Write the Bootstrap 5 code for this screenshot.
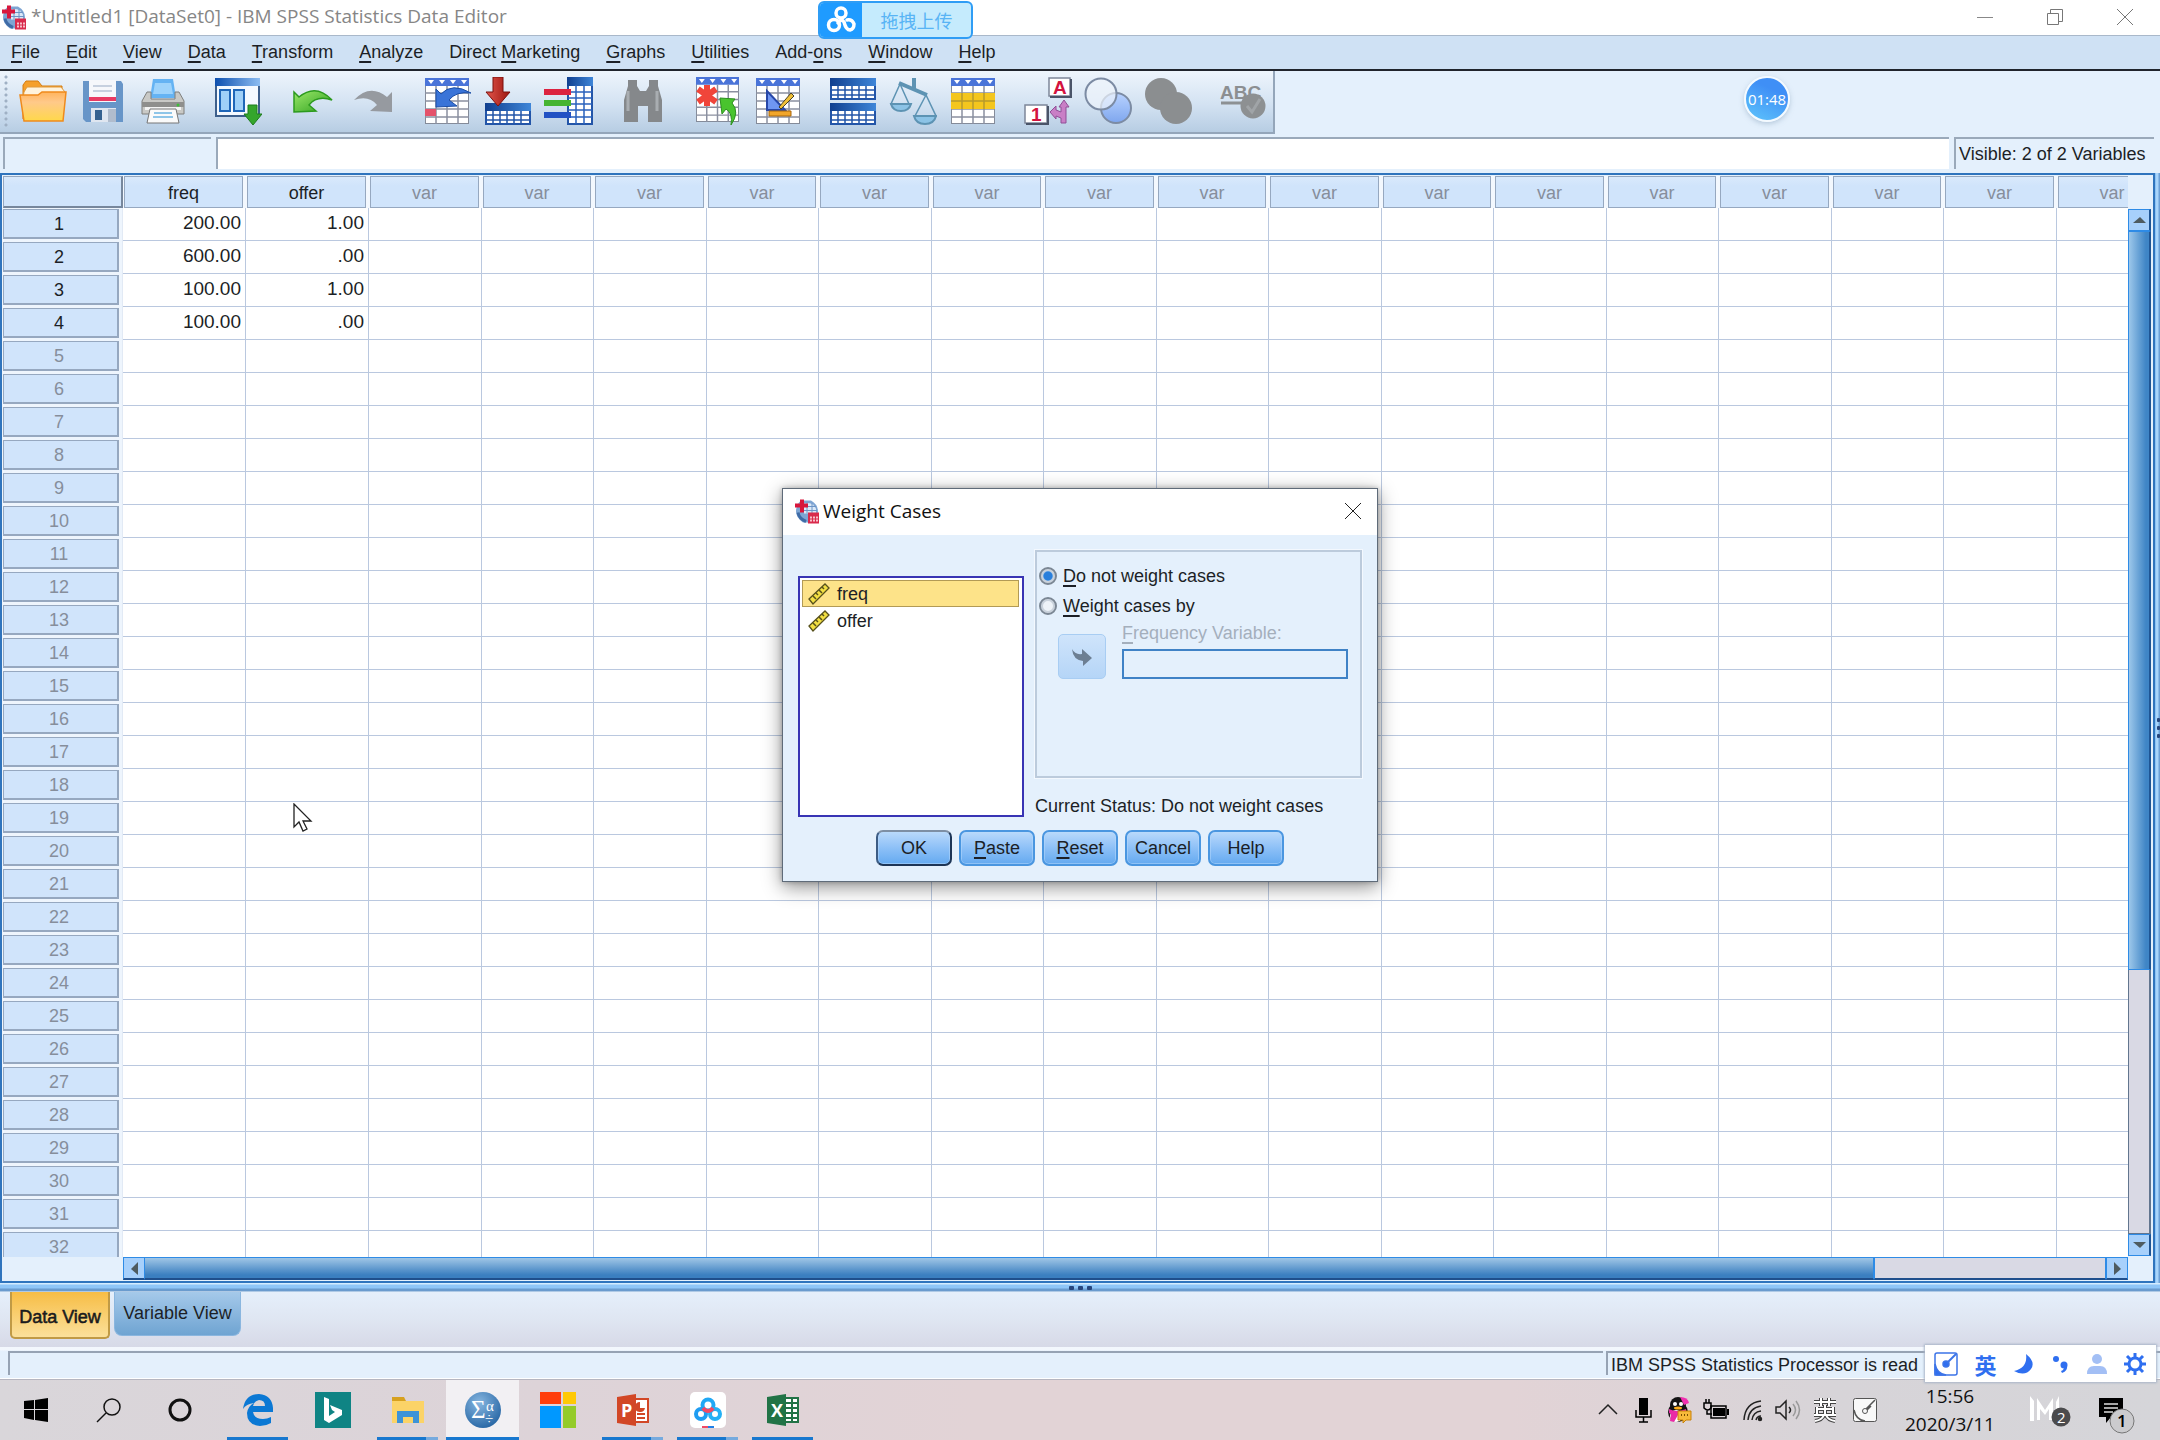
<!DOCTYPE html>
<html lang="en">
<head>
<meta charset="utf-8">
<meta name="viewport" content="width=device-width, initial-scale=1">
<title>*Untitled1 [DataSet0] - IBM SPSS Statistics Data Editor</title>
<link rel="stylesheet" href="https://cdn.jsdelivr.net/npm/bootstrap@5.3.0/dist/css/bootstrap.min.css">
<style>
:root{--pane:#e4f0fc;--head:#d0e4fb;--rule:#bac8df;--edge:#96a8c0;--blue:#3b82c8}
html,body{height:100%}
body{font-family:"Liberation Sans",Arial,sans-serif;font-size:18px;line-height:24px;color:#1c1f26;background:var(--pane);overflow:hidden}
button{font:inherit;color:inherit}
svg{display:block;flex:none}
.sysfont{font-family:"Open Sans","Noto Sans",sans-serif}
.plain{border:0;background:none;padding:0}
.app{height:100vh;min-height:900px}
/* title bar */
.titlebar{height:35px;background:#fff;color:#868686;font-size:19px;padding-left:2px}
.titlebar .caption{padding:0 0 2px 5px}
.winbtn{width:70px;height:33px}
/* menu */
.menubar{height:36px;background:#cfe1f4;border-top:1px solid #a9b8ca;border-bottom:2px solid #20242c}
.menubar a{color:#1c1f26;padding:4px 13px;text-decoration:none}
.menubar a:first-child{padding-left:11px}
.menubar u,.dlg u{text-underline-offset:3px;text-decoration-thickness:2px}
/* toolbar */
.toolrow{height:66px;background:var(--pane)}
.tools{height:63px;padding-left:13px;gap:15px;background:linear-gradient(#eef5fc,#d3e2f2 55%,#b7cde3);border-right:2px solid #94a6ba;border-bottom:2px solid #94a6ba;position:relative}
.grip{position:absolute;left:4px;top:4px;bottom:4px;width:4px;background:radial-gradient(circle at 2px 2px,#9fb0c4 1px,#f4f9ff00 2px);background-size:4px 6px}
.tools button{width:60px;height:60px}
.timer{position:absolute;top:76px;right:370px;width:46px;height:46px;border-radius:50%;border:2px solid #f4faff;background:linear-gradient(25deg,#5ec4fb,#3f8ff6 70%);color:#fff;font-size:15px;box-shadow:0 2px 5px #8aa3bd80}
.upload{position:absolute;top:1px;left:818px;width:155px;height:38px;border:2px solid #2f9df5;border-radius:6px;background:#c5ebfd;color:#58b4f5;font-family:"Noto Sans CJK SC",sans-serif;overflow:hidden}
.upload .mark-box{width:42px;background:#1f9bff;align-self:stretch}
/* cell editor */
.editrow{height:36px;padding:0 6px 4px 3px;gap:5px}
.editrow>*{height:32px;border:0;border-top:2px solid #9aa9ba;border-left:2px solid #9aa9ba;border-radius:0}
.cellname{width:208px;background:var(--pane)}
.cellval{background:#fff}
.visible-vars{padding:3px;white-space:nowrap;width:200px}
/* data grid */
.frame-area{padding-right:5px;background:linear-gradient(90deg,#6fb0ee calc(100% - 5px),#a9d5fb calc(100% - 4px),#a9d5fb calc(100% - 2px),#6b9fd6 calc(100% - 1px));min-height:0}
.frame-box{border:2px solid #2f74bd;background:var(--pane);padding:1px 2px 0 0;min-height:0;min-width:0}
.gridwrap{overflow:hidden;min-height:0;background:#fff}
.gridpane{padding-bottom:1px}
.dgrid{table-layout:fixed;border-collapse:separate;border-spacing:0;width:2167px;font-size:19px}
.dgrid td,.dgrid th{padding:0;font-weight:400;white-space:nowrap}
.dgrid td{height:33px;border-right:1px solid var(--rule);border-bottom:1px solid var(--rule);text-align:right;padding:0 4px 1px 0;line-height:24px}
.dgrid thead th{height:32px;background:#f3f8fe}
.dgrid thead span{display:block;height:32px;margin:0 3px 0 1px;border:1px solid var(--edge);background:linear-gradient(#d9e9fc,var(--head) 30%);text-align:center;line-height:32px;font-size:18px}
.dgrid thead th:first-child span{margin:0 0 0 1px;border-right:2px solid #77879c;border-bottom:2px solid #77879c}
.dgrid tbody th{height:33px;background:#eef5fd;border-right:1px solid #e2eaf5}
.dgrid tbody th span{display:block;height:30px;margin:1px 3px 2px 1px;border:1px solid var(--edge);border-right-width:2px;border-bottom-width:2px;background:var(--head);text-align:center;line-height:28px;font-size:18px;padding-right:3px}
.off{color:#868e9b}
.faded{color:#a4afbc}
.c0{width:121px}.c1{width:123px}.c2{width:113px}.c3{width:112px}
.vbar{width:23px;padding-top:33px}
.vbar>*{border:1px solid #2e8be6;border-right:2px solid #1f5594}
.vbar button{height:22px;background:#a7d0fb}
.vbar button svg,.hbar button svg{margin:auto}
.vthumb{flex:741;background:linear-gradient(90deg,#9cc7ea,#3f85c6 85%)}
.vtrack{flex:264;background:#d9d9e4;border-color:#62758e!important;border-top:0!important}
.hbar{height:23px;margin-left:121px}
.hbar>*{border:1px solid #2e8be6;border-bottom:2px solid #1f4f8c}
.hbar button{width:22px;background:#a7d0fb}
.hthumb{flex:1732;background:linear-gradient(#a0c6e6,#3b7fc0 85%);border-left:0!important}
.htrack{flex:230;background:#d9d9e4}
.corner{height:25px}
.splitter{height:9px;background:linear-gradient(#d4ecff 1px,#8fc6f8 2px,#8fc6f8 5px,#6a9bce 6px,#6a9bce 8px,#f4f8fd 9px)}
.knob{width:5px;height:4px;background:#27467c;border-radius:1px}
.side-knob{position:absolute;right:0;top:718px}
.side-knob .knob{width:3px}
.viewtabs{height:55px;padding-left:10px;gap:4px;background:linear-gradient(#e5effb,#dfe6f2 50%,#d7d9e7);align-items:flex-start}
.tab-on{width:100px;height:47px;border:2px solid #c09a45;border-top:0;border-radius:0 0 5px 5px;background:linear-gradient(#f7bd45,#fbe09a);-webkit-text-stroke:.5px #111;white-space:nowrap;padding:4px 0 0}
.tab-off{width:127px;height:44px;border:1px solid #8ab6df;border-top:0;border-radius:0 0 8px 8px;background:linear-gradient(#a5c9ea,#6fa4d2);padding-bottom:3px}
.statusbar{height:32px;padding:4px 0 3px 8px;gap:3px;border-bottom:1px solid #fff;background:linear-gradient(#f3f7fd 3px,var(--pane) 4px)}
.statusbar>*{border-top:2px solid #96a3b4;border-left:2px solid #96a3b4}
.ready{width:554px;padding-left:3px;white-space:nowrap}
.ime{position:absolute;top:-35px;right:4px;width:231px;height:37px;background:#fff;box-shadow:0 0 2px 1px #a9b5c8;padding:0 10px 0 9px;color:#2f6ff0;font-family:"Noto Sans CJK SC",sans-serif;font-weight:700;font-size:22px}
/* dialog */
.dlg{top:488px;width:596px;background:var(--pane);border:1px solid #5f6b79;box-shadow:0 5px 18px #00000070,0 0 5px #00000040}
.dlg-head{height:46px;background:#fff;padding:0 16px 2px 12px;color:#111;font-size:19px}
.dlg-body{padding:15px}
.varlist{width:226px;height:241px;border:2px solid #3834b4;background:#fff;padding:2px 3px 2px 2px;margin-top:26px;margin-right:11px}
.varlist button{height:27px;width:100%;padding:0 4px;gap:6px;border:1px solid transparent;background:none;text-align:left}
.varlist button[aria-selected=true]{background:#fde389;border-color:#b29a55}
.groupbox{width:327px;height:228px;border:2px solid #bccbdc;outline:1px solid #f3f8fe;padding:9px 2px}
.groupbox .form-check{min-height:30px;padding:0;margin:0;gap:6px;display:flex;align-items:center}
.groupbox .form-check-input{float:none;margin:0;width:18px;height:18px;border:2px solid #7b8794;background:#eef3f8;box-shadow:inset 0 0 0 2px #c9d2dc}
.groupbox .form-check-input:checked{background:radial-gradient(circle,#2a7fdb 4px,#7fb4e8 5px,#dce6f0 6px)}
.mover{width:48px;height:45px;margin-left:19px;border:1px solid #a8cdf3;border-radius:5px;background:linear-gradient(#cfe4fb,#b5d5f7)}
.freqin{width:226px;height:30px;border:2px solid #3f82c6;border-radius:0;background:var(--pane);padding:0 4px}
.dlgbtn{width:76px;height:36px;padding:0;border:2px solid #4a96e0;border-radius:7px;background:linear-gradient(#b9d9fb,#8dc0f7 50%,#65aaf0);box-shadow:inset 0 0 0 1px #b7dafb80}
.dlgbtn.first{border-color:#7e8fa4 #1d3556 #1d3556 #3c5c84}
.dlgbtns{gap:7px}
/* taskbar */
.taskbar{height:61px;border-top:1px solid #b6b6c0;background:linear-gradient(90deg,#d9d6da,#ddd3d8 25%,#e2d3d6 45%,#e2d3d6 70%,#d7d4d8 85%,#d5d5d9);position:relative}
.taskbar .sys{width:72px}
.taskbar .prog{width:75px;position:relative}
.prog.run::after{content:"";position:absolute;left:7px;right:7px;bottom:0;height:3px;background:#1878cf}
.prog.multi::after{background:linear-gradient(90deg,#1878cf 80%,#76aade 80%)}
.taskbar .prog.cur{background:#f2f0f3;width:73px;margin:0 1px}
.prog.cur::after{left:0;right:0}
.tray{gap:11px}
.clock{font-size:19px;line-height:28px;text-align:center;color:#111;width:116px}
.pointer{position:absolute;left:293px;top:803px}
</style>
<script src="https://cdn.jsdelivr.net/npm/bootstrap@5.3.0/dist/js/bootstrap.bundle.min.js"></script>
</head>
<body>
<!-- shared symbols -->
<svg width="0" height="0" class="position-absolute" aria-hidden="true">
<defs>
<linearGradient id="gb" x1="0" x2="1"><stop offset="0" stop-color="#0d4fae"/><stop offset="1" stop-color="#8dbdf2"/></linearGradient>
<linearGradient id="gn" x1="0" x2="1"><stop offset="0" stop-color="#103f8f"/><stop offset="1" stop-color="#3f86d8"/></linearGradient>
<linearGradient id="go" x1="0" y1="0" x2="0" y2="1"><stop offset="0" stop-color="#ffb45e"/><stop offset=".35" stop-color="#ffc98a"/><stop offset="1" stop-color="#ffd84a"/></linearGradient>
<linearGradient id="gg" x1="0" y1="0" x2="1" y2="1"><stop offset="0" stop-color="#9be86a"/><stop offset="1" stop-color="#2ea01e"/></linearGradient>
<linearGradient id="gr" x1="0" x2="1"><stop offset="0" stop-color="#e2564c"/><stop offset="1" stop-color="#9c150f"/></linearGradient>
<linearGradient id="gl" x1="0" y1="0" x2="0" y2="1"><stop offset="0" stop-color="#b8d2ff"/><stop offset="1" stop-color="#7ea6ee"/></linearGradient>
<radialGradient id="gs" cx=".4" cy=".3" r=".8"><stop offset="0" stop-color="#86b6e0"/><stop offset="1" stop-color="#1f5f9f"/></radialGradient>
<symbol id="spss" viewBox="0 0 24 24"><path d="M6 1h10q7 4 7 11t-7 11H8q-7-5-7-11Q1 5 6 1z" fill="#7ea5d3"/><path d="M9 4q8-2 12 5v5H9z" fill="#dbe9f8"/><path d="M9 7h12M9 11h13M12 3v11M17 4v10" stroke="#6d94c6"/><path d="M3 13q1 6 8 9" stroke="#3f6ba6" stroke-width="3" fill="none"/><path d="M5 0h4v4h4v4H9v5H5V8H0V4h5z" fill="#d8163c"/><path d="M13 13h11v11H13z" fill="#d92a4c"/><path d="M15 17h2v2h-2zM18 17h2v2h-2zM21 17h2v2h-2zM15 20h2v2h-2zM18 20h2v2h-2zM21 20h2v2h-2z" fill="#f8c2cc"/></symbol>
<symbol id="ruler" viewBox="0 0 24 22"><path d="M2 16 18 1l4 4L6 21z" fill="#f2df42" stroke="#57511c" stroke-width="1.3"/><path d="m6 13 3 3m0-6 2 2m1-5 3 3m0-6 2 2" stroke="#57511c" stroke-width="1.5"/></symbol>
<symbol id="sheet" viewBox="0 0 44 46"><path d="M0 0h44v46H0z" fill="#fff" stroke="#848b99" stroke-width="2"/><path d="M0 0h44v8H0z" fill="#4a74d8"/><path d="M3 2h6l-3 4zM14 2h6l-3 4zM25 2h6l-3 4zM36 2h6l-3 4z" fill="#fff"/><path d="M0 15h44M0 23h44M0 31h44M0 39h44M11 8v38M22 8v38M33 8v38" stroke="#8b90a0" stroke-width="1.5"/></symbol>
<symbol id="minitab" viewBox="0 0 46 22"><path d="M1 1h44v20H1z" fill="#fff" stroke="#2355a8" stroke-width="2"/><path d="M0 0h46v8H0z" fill="url(#gn)"/><path d="M1 12h44M1 17h44M8 8v13M15 8v13M22 8v13M29 8v13M36 8v13" stroke="#2355a8" stroke-width="1.5"/></symbol>
<symbol id="cloud3" viewBox="0 0 30 28"><g fill="none" stroke-width="3.5" stroke-linecap="round"><circle cx="15" cy="7" r="5"/><circle cx="8" cy="19" r="5.500"/><path d="M12 17q3-5 6-1 2 8 6 8 4-1 4-6-2-5-7-4"/></g></symbol>
</defs></svg>

<div class="app d-flex flex-column position-relative">
  <header class="titlebar sysfont d-flex align-items-center">
    <svg width="24" height="25"><use href="#spss"/></svg>
    <span class="caption flex-grow-1">*Untitled1 [DataSet0] - IBM SPSS Statistics Data Editor</span>
    <button class="winbtn plain d-flex align-items-center justify-content-center" aria-label="Minimize"><svg width="16" height="16"><path d="M0 8.500h16" stroke="#888"/></svg></button>
    <button class="winbtn plain d-flex align-items-center justify-content-center" aria-label="Restore"><svg width="16" height="16" fill="none" stroke="#777"><path d="M.5 4.500h11v11H.5zM3.500 4V.5h12v12H12"/></svg></button>
    <button class="winbtn plain d-flex align-items-center justify-content-center" aria-label="Close"><svg width="16" height="16" stroke="#777"><path d="m0 0 16 16M16 0 0 16"/></svg></button>
  </header>

  <nav class="menubar d-flex align-items-center flex-shrink-0" aria-label="Main menu">
    <a href="#"><u>F</u>ile</a><a href="#"><u>E</u>dit</a><a href="#"><u>V</u>iew</a><a href="#"><u>D</u>ata</a><a href="#"><u>T</u>ransform</a><a href="#"><u>A</u>nalyze</a><a href="#">Direct <u>M</u>arketing</a><a href="#"><u>G</u>raphs</a><a href="#"><u>U</u>tilities</a><a href="#">Add-<u>o</u>ns</a><a href="#"><u>W</u>indow</a><a href="#"><u>H</u>elp</a>
  </nav>

  <div class="toolrow d-flex align-items-start flex-shrink-0">
    <div class="tools d-flex align-items-center" role="toolbar" aria-label="Data editor tools">
      <span class="grip"></span>
      <div class="d-flex">
        <button class="plain" aria-label="Open"><svg class="m-auto" width="48" height="48" viewBox="0 0 48 48"><path d="M4 42V8l3-4h12l4 5h20v33z" fill="#f5a02c" stroke="#d57c10"/><path d="M5 15 8 10h34l4 5v6H4z" fill="#fff3dc" stroke="#e09a3a"/><path d="M1 18h18l4-3h24l-3 29H5z" fill="url(#go)" stroke="#ef8a1c" stroke-width="1.500"/></svg></button>
        <button class="plain" aria-label="Save"><svg class="m-auto" width="44" height="44" viewBox="0 0 44 44"><path d="M2 2h38l2 3v38H5l-3-3z" fill="#6795c8"/><path d="M8 1h27v22H8z" fill="#f5f7fb"/><path d="M12 7h19M12 12h19" stroke="#b7c3d6" stroke-width="1.500"/><path d="M8 18h27v4H8z" fill="#e83a63"/><path d="M10 29h25v14H10z" fill="#dfe6f0"/><path d="M14 31h7v10h-7z" fill="#35618f"/><path d="M27 30h8v13h-8z" fill="#b0bccd"/></svg></button>
        <button class="plain" aria-label="Print"><svg class="m-auto" width="44" height="46" viewBox="0 0 44 46"><path d="M12 1h20l3 19H9z" fill="#65b3f3"/><path d="M14 5h16l2 11H12z" fill="#9ed3fb"/><path d="M6 14h4v7h24v-7h4l5 9v13H1V23z" fill="#c9c9c6" stroke="#7f7f7d"/><path d="M1 24h42v5H1z" fill="#8f8f8d"/><path d="M4 29h36v3H4z" fill="#f4f4f4"/><path d="M9 31h26l3 14H6z" fill="#fafafa" stroke="#777"/><path d="M13 35h18M12 39h20" stroke="#8ec5e8" stroke-width="2"/><circle cx="37" cy="27" r="1.500" fill="#3fbd3a"/></svg></button>
      </div>
      <div class="d-flex">
        <button class="plain" aria-label="Recall dialogs"><svg class="m-auto" width="48" height="48" viewBox="0 0 48 48"><path d="M2 2h43v37H2z" fill="#f4f9ff" stroke="#3d5f8c" stroke-width="2"/><path d="M1 1h45v8H1z" fill="url(#gb)"/><path d="M6 13h10v21H6zM20 13h10v21H20z" fill="#9fd0f8" stroke="#1f66b8" stroke-width="2"/><path d="M34 28h9v9h5l-9 11-9-11h4z" fill="#35a62c" stroke="#1d7c1c"/></svg></button>
      </div>
      <div class="d-flex">
        <button class="plain" aria-label="Undo"><svg class="m-auto" width="42" height="26" viewBox="0 0 42 26"><path d="m2 4 5 5Q24-5 40 12 25 7 17 17l7 6-22 1z" fill="url(#gg)" stroke="#2c9a1e" stroke-width="1.500"/></svg></button>
        <button class="plain" aria-label="Redo"><svg class="m-auto" width="42" height="26" viewBox="0 0 42 26"><path d="m40 4-5 5Q18-5 2 12q15-5 23 5l-7 6 22 1z" fill="#969aa0"/></svg></button>
      </div>
      <div class="d-flex">
        <button class="plain" aria-label="Go to case"><svg class="m-auto" width="48" height="48" viewBox="0 0 48 48"><use href="#sheet" x="1" y="1" width="44" height="46"/><path d="M1 32h11v7H1z" fill="#e4526a"/><path d="m12 12 5 5Q28 5 47 16 32 14 25 23l8 6-21 1z" fill="#3a74d8" stroke="#1c4ea6"/></svg></button>
        <button class="plain" aria-label="Go to variable"><svg class="m-auto" width="48" height="48" viewBox="0 0 48 48"><use href="#minitab" x="1" y="26" width="46" height="22"/><path d="M9 0h10v15h7L14 29 2 15h7z" fill="url(#gr)" stroke="#7d100c"/></svg></button>
        <button class="plain" aria-label="Variables"><svg class="m-auto" width="50" height="48" viewBox="0 0 50 48"><path d="M25 1h24v46H25z" fill="#fff" stroke="#2355a8" stroke-width="2"/><path d="M24 0h26v9H24z" fill="url(#gn)"/><path d="M25 15h24M25 21h24M25 27h24M25 33h24M25 40h24M33 8v39M41 8v39" stroke="#2a62bd" stroke-width="1.500"/><path d="M1 12h27v6H1z" fill="#dc2340"/><path d="M1 23h27v6H1z" fill="#46b432"/><path d="M1 35h27v6H1z" fill="#2352c4"/></svg></button>
      </div>
      <div class="d-flex">
        <button class="plain" aria-label="Find"><svg class="m-auto" width="40" height="44" viewBox="0 0 40 44" fill="#85888b"><path d="M5 1h9v6l3 5h6l3-5V1h9v6l4 14v22H25V27H15v16H1V21L5 7z"/><path d="M5 12v20M34 12v20" stroke="#a9adb1" stroke-width="3"/></svg></button>
      </div>
      <div class="d-flex">
        <button class="plain" aria-label="Insert cases"><svg class="m-auto" width="46" height="50" viewBox="0 0 46 50"><use href="#sheet" x="1" y="1" width="43" height="45"/><g stroke="#f0453a" stroke-width="6"><path d="M12 9v21M3 13l18 13M21 13 3 26"/></g><path d="m25 22 15 1-3 4q8 9-1 22 2-12-5-16l-4 5z" fill="#49c42e" stroke="#2c8f1e"/></svg></button>
        <button class="plain" aria-label="Insert variable"><svg class="m-auto" width="46" height="48" viewBox="0 0 46 48"><use href="#sheet" x="1" y="1" width="44" height="46"/><path d="M12 14v19h18z" fill="#6f96f2" stroke="#2747a8" stroke-width="2"/><path d="m24 30 12-14 3 3-13 13z" fill="#f0c038" stroke="#4b4326"/><path d="M14 34h22v5H14z" fill="#f1a62b" stroke="#a8660d"/></svg></button>
      </div>
      <div class="d-flex">
        <button class="plain" aria-label="Split file"><svg class="m-auto" width="46" height="48" viewBox="0 0 46 48"><use href="#minitab" y="1" width="46" height="22"/><use href="#minitab" y="26" width="46" height="22"/></svg></button>
        <button class="plain" aria-label="Weight cases"><svg class="m-auto" width="48" height="48" viewBox="0 0 48 48" fill="none" stroke="#5d93b3" stroke-width="2"><path d="M25 1v12M10 6l28 12" stroke-width="4"/><path d="M11 7 2 27h18zM37 18l-11 21h21z" stroke-width="1.500"/><path d="M2 27h20q-2 7-10 7T2 27zM25 39h22q-2 8-11 8t-11-8z" fill="#8cc3e6"/></svg></button>
        <button class="plain" aria-label="Select cases"><svg class="m-auto" width="46" height="48" viewBox="0 0 46 48"><use href="#sheet" x="1" y="1" width="44" height="46"/><path d="M1 16h44v16H1z" fill="#f4c61e"/><path d="M1 24h44M12 16v16M23 16v16M34 16v16" stroke="#b79a2c" stroke-width="1.500"/></svg></button>
      </div>
      <div class="d-flex">
        <button class="plain" aria-label="Value labels"><svg class="m-auto" width="48" height="50" viewBox="0 0 48 50" font-family="Liberation Sans,sans-serif" font-weight="700" font-size="19" fill="#d3133f"><path d="M25 2h21v18H25zM1 29h22v18H1z" fill="#fff" stroke="#7e8799" stroke-width="1.500"/><path d="M47 3v18H26M24 30v18H2" stroke="#4a5468" stroke-width="2" fill="none"/><text x="29" y="18">A</text><text x="7" y="45">1</text><path d="m40 24 5 7h-3v16h-5v-5l-5-2v3l-6-7 6-6v4l5 2v-5h-2z" fill="#c97fc6" stroke="#8f4f96"/></svg></button>
        <button class="plain" aria-label="Use variable sets"><svg class="m-auto" width="48" height="48" viewBox="0 0 48 48" stroke="#7c8ba3" stroke-width="2"><circle cx="32" cy="31" r="15" fill="url(#gl)"/><circle cx="17" cy="17" r="15.500" fill="#eef3fb" fill-opacity=".7"/></svg></button>
        <button class="plain" aria-label="Show all variables"><svg class="m-auto" width="48" height="48" viewBox="0 0 48 48" fill="#8b8e90"><circle cx="17" cy="17" r="16"/><circle cx="32" cy="31" r="16"/></svg></button>
      </div>
      <div class="d-flex">
        <button class="plain" aria-label="Spell check"><svg class="m-auto" width="48" height="38" viewBox="0 0 48 38"><text x="1" y="17" font-family="Liberation Sans,sans-serif" font-weight="700" font-size="19" fill="#8c8f91">ABC</text><path d="M2 21h22" stroke="#8c9093" stroke-width="3"/><circle cx="34" cy="24" r="12.500" fill="#8d9092"/><path d="m28 24 5 6 8-13" fill="none" stroke="#a0a4a7" stroke-width="3"/></svg></button>
      </div>
    </div>
  </div>

  <div class="editrow d-flex flex-shrink-0">
    <div class="cellname"></div>
    <input class="cellval flex-grow-1" aria-label="Cell value">
    <div class="visible-vars">Visible: 2 of 2 Variables</div>
  </div>

  <main class="frame-area d-flex flex-grow-1">
    <div class="frame-box d-flex flex-grow-1">
      <div class="gridpane d-flex flex-column flex-grow-1 overflow-hidden">
        <div class="gridwrap flex-grow-1">
          <table class="dgrid" id="grid"><colgroup></colgroup><thead><tr></tr></thead><tbody></tbody></table>
        </div>
        <div class="hbar d-flex flex-shrink-0">
          <button class="plain d-flex" aria-label="Scroll left"><svg width="9" height="13"><path d="M8 0v13L1 7z" fill="#4e5b60"/></svg></button>
          <div class="hthumb"></div><div class="htrack"></div>
          <button class="plain d-flex" aria-label="Scroll right"><svg width="9" height="13"><path d="M1 0v13l7-6z" fill="#4e5b60"/></svg></button>
        </div>
      </div>
      <div class="vbar d-flex flex-column flex-shrink-0">
        <button class="plain d-flex" aria-label="Scroll up"><svg width="13" height="8"><path d="M0 7h13L7 1z" fill="#4e5b60"/></svg></button>
        <div class="vthumb"></div><div class="vtrack"></div>
        <button class="plain d-flex" aria-label="Scroll down"><svg width="13" height="8"><path d="M0 1h13L7 7z" fill="#4e5b60"/></svg></button>
        <div class="corner border-0"></div>
      </div>
    </div>
  </main>

  <div class="splitter d-flex justify-content-center align-items-center gap-1 flex-shrink-0"><i class="knob"></i><i class="knob"></i><i class="knob"></i></div>

  <div class="viewtabs d-flex flex-shrink-0" role="tablist">
    <button class="tab-on" role="tab" aria-selected="true">Data View</button>
    <button class="tab-off px-0" role="tab" aria-selected="false">Variable View</button>
  </div>

  <div class="statusbar d-flex flex-shrink-0">
    <div class="flex-grow-1"></div>
    <div class="ready">IBM SPSS Statistics Processor is read</div>
  </div>

  <footer class="taskbar d-flex align-items-stretch flex-shrink-0">
    <button class="plain sys" aria-label="Start"><svg class="m-auto" width="24" height="24"><path d="m0 3 10-1v9H0zM11 2l13-2v11H11zM0 12h10v10L0 20zM11 12h13v12l-13-2z"/></svg></button>
    <button class="plain sys" aria-label="Search"><svg class="m-auto" width="25" height="25" fill="none" stroke="#111" stroke-width="1.500"><circle cx="16" cy="9" r="8"/><path d="M10 15 1 24"/></svg></button>
    <button class="plain sys me-1" aria-label="Cortana"><svg class="m-auto" width="24" height="24" fill="none" stroke="#111" stroke-width="3"><circle cx="12" cy="12" r="10"/></svg></button>
    <button class="plain prog run" aria-label="Edge"><svg class="m-auto" width="30" height="32" viewBox="0 0 30 32"><path d="M0 15Q2 0 16 0q13 1 14 14v4H10q1 7 10 7 4 0 8-2v6q-5 3-11 3Q4 31 4 19q1-7 7-10-8 1-11 6zm10-3h12q0-6-6-6-5 1-6 6z" fill="#0b78d4"/></svg></button>
    <button class="plain prog" aria-label="Bing"><svg class="m-auto" width="36" height="36"><path d="M0 0h36v36H0z" fill="#0f8484"/><path d="m9 5 5 2v17l6-4-3-2-2-5 12 5v5l-13 8-5-3z" fill="#fff"/></svg></button>
    <button class="plain prog run multi" aria-label="File Explorer"><svg class="m-auto" width="32" height="28"><path d="M0 1h12l2 4H0z" fill="#d7a11f"/><path d="M0 5h32v22H0z" fill="#fbd367"/><path d="M5 15h22v12h-6v-6H11v6H5z" fill="#3d93d8"/></svg></button>
    <button class="plain prog run cur" aria-label="SPSS Statistics"><svg class="m-auto" width="36" height="36" font-family="Liberation Serif,serif" fill="#fff"><circle cx="18" cy="18" r="18" fill="url(#gs)"/><text x="6" y="26" font-size="25">Σ</text><text x="21" y="19" font-size="15">α</text><text x="20" y="32" font-size="15">÷</text></svg></button>
    <button class="plain prog" aria-label="Microsoft"><svg class="m-auto" width="36" height="36"><path d="M0 0h21v12H0z" fill="#ff3d0a"/><path d="M23 0h13v12H23z" fill="#ffc905"/><path d="M0 14h21v22H0z" fill="#0098ff"/><path d="M23 14h13v22H23z" fill="#94cb2a"/></svg></button>
    <button class="plain prog run multi" aria-label="PowerPoint"><svg class="m-auto" width="32" height="32"><path d="M18 5h13v23H18z" fill="#fff" stroke="#d24726" stroke-width="2"/><path d="M20 20h8M20 24h8" stroke="#d24726" stroke-width="2"/><path d="M23 8a5 5 0 1 0 5 6h-5z" fill="#d24726"/><path d="M0 3 19 0v32L0 29z" fill="#d24726"/><text x="4" y="23" font-family="Open Sans,sans-serif" font-weight="700" font-size="18" fill="#fff">P</text></svg></button>
    <button class="plain prog run multi" aria-label="Baidu Netdisk"><svg class="m-auto" width="36" height="36"><rect width="36" height="36" rx="5" fill="#fff"/><g fill="none" stroke-width="4"><circle cx="18" cy="13" r="5.500" stroke="#20a8f5"/><circle cx="11" cy="22" r="5" stroke="#1f9df2"/><circle cx="25" cy="22" r="5" stroke="#24b0f5"/><path d="M13 16q5 6 10 0" stroke="#f04a66"/></g><path d="M12 35h6" stroke="#f04a66" stroke-width="2"/><path d="M18 35h6" stroke="#1f7fe8" stroke-width="2"/></svg></button>
    <button class="plain prog run" aria-label="Excel"><svg class="m-auto" width="32" height="32"><path d="M18 4h13v24H18z" fill="#fff" stroke="#217346" stroke-width="2"/><path d="M18 9h13M18 14h13M18 19h13M18 24h13M25 4v24" stroke="#217346" stroke-width="2"/><path d="M0 3 19 0v32L0 29z" fill="#217346"/><text x="4" y="23" font-family="Open Sans,sans-serif" font-weight="700" font-size="18" fill="#fff">X</text></svg></button>

    <div class="tray d-flex align-items-center ms-auto">
      <svg width="24" height="24" fill="none" stroke="#222" stroke-width="1.500"><path d="m3 16 9-9 9 9"/></svg>
      <svg width="24" height="26"><path d="M8 1h9v17H8z"/><path d="M5 13v7h15v-7M12.500 20v5M8 25h9" fill="none" stroke="#000" stroke-width="1.500"/></svg>
      <svg width="26" height="26"><ellipse cx="12" cy="15" rx="10" ry="10" fill="#141414"/><ellipse cx="12" cy="8" rx="8" ry="8" fill="#141414"/><path d="M14 0q8 0 9 6l-5 2z" fill="#f12fb0"/><ellipse cx="10" cy="19" rx="6" ry="6" fill="#fff"/><path d="M3 12q8 4 17 0v4q-4 2-8 2l-4 7-4-1 1-7-2-1z" fill="#ea2aa6"/><circle cx="9" cy="7" r="2" fill="#fff"/><circle cx="15" cy="7" r="2" fill="#fff"/><ellipse cx="12" cy="11" rx="4" ry="1.500" fill="#ffae1a"/><path d="M12 14h13v9h-5l-3 3v-3h-5z" fill="#f7b93a" stroke="#c98108"/><path d="M15 18h1M18 18h1M21 18h1" stroke="#7a4e00" stroke-width="2"/></svg>
      <svg width="26" height="24"><path d="M8 8h15v12H8z" stroke="#000" fill="none" stroke-width="1.500"/><path d="M10 10h12v8H10zM24 11h2v6h-2z"/><path d="M1 5h7v5q-3 4-7 0zM3 1v4M6 1v4M4 12v4h5" fill="none" stroke="#000" stroke-width="1.500"/></svg>
      <svg width="24" height="24" fill="none" stroke="#222" stroke-width="1.500"><path d="M4 22Q5 5 21 3M8 22Q9 10 21 8M12 22q1-8 9-9M16 22q1-4 5-4"/><circle cx="20" cy="21" r="1.500" fill="#222"/></svg>
      <svg width="26" height="24" fill="none" stroke="#222" stroke-width="1.500"><path d="M1 9h4l6-6v18l-6-6H1zM14 9q3 3 0 6"/><path d="M18 6q5 6 0 12M21 3q7 9 0 18" stroke="#999"/></svg>
      <svg width="26" height="26" fill="none" stroke="#444" stroke-width="4"><path d="M2 5h22M9 1v8M17 1v8M5 12h16M5 10v8M21 10v8M13 8v10M2 18h22M12 18q-2 5-9 6M14 18q2 5 9 6"/><path d="M2 5h22M9 1v8M17 1v8M5 12h16M5 10v8M21 10v8M13 8v10M2 18h22M12 18q-2 5-9 6M14 18q2 5 9 6" stroke="#fff" stroke-width="2"/></svg>
      <svg class="ms-1" width="24" height="24" fill="#f8f8f8" stroke="#555"><rect x=".5" y=".5" width="23" height="23" rx="2"/><path d="M1 12q2 10 11 11M13 11l9-9M11 15l7-7" fill="none" stroke-width="1.500"/><circle cx="12" cy="13" r="2.500"/></svg>
      <div class="clock sysfont ms-1">15:56<br>2020/3/11</div>
      <svg class="ms-2" width="44" height="34"><path d="M3 3v25h4V8zM10 5l8 12 8-12v22h-4V16l-4 6-5-6v11h-3zM29 9v12h3V3z" fill="#fff"/><circle cx="34" cy="24" r="9.500" fill="#4b4b4d"/><text x="30" y="30" font-family="Open Sans,sans-serif" font-size="15" fill="#fff">2</text></svg>
      <svg class="ms-3 me-4" width="38" height="50" viewBox="0 -12 38 50"><path d="M1 1h24v19H13l-5 6v-6H1z"/><path d="M6 7h14M6 11h14M6 15h9" stroke="#ddd" stroke-width="1.500"/><circle cx="24" cy="24" r="12" fill="#cbcbce" stroke="#777"/><text x="19" y="30" font-family="Open Sans,sans-serif" font-size="17" font-weight="600">1</text></svg>
    </div>

    <div class="ime d-flex align-items-center justify-content-between">
      <svg width="24" height="24" fill="none" stroke="#3c74e8" stroke-width="1.500"><rect x="1" y="1" width="22" height="22" rx="2"/><path d="M1 12q2 10 11 11H1z" fill="#2f6ff0"/><circle cx="12" cy="12" r="3" fill="#2f6ff0"/><path d="m13 11 9-9" stroke-width="2"/></svg>
      <span>英</span>
      <svg width="22" height="22"><path d="M13 1q10 8 5 15-6 8-17 2 14-3 12-17z" fill="#2f6ff0"/></svg>
      <svg width="18" height="20" fill="#2f6ff0"><circle cx="5" cy="5" r="3"/><circle cx="13" cy="11" r="3.500"/><path d="M16 11q1 6-5 8l-1-2q3-1 3-4z"/></svg>
      <svg width="22" height="22" fill="#a3bff5"><circle cx="11" cy="6" r="5"/><path d="M1 21q0-8 7-8h6q7 0 7 8z"/></svg>
      <svg width="22" height="22" viewBox="-11 -11 22 22" fill="none" stroke="#2f6ff0"><circle r="6" stroke-width="3"/><path d="M0-11v5M0 11V6M-11 0h5M11 0H6M-8-8l4 4M8 8 4 4M8-8 4-4M-8 8l4-4" stroke-width="3"/></svg>
    </div>
  </footer>

  <!-- floating items over the window -->
  <div class="upload d-flex align-items-center">
    <span class="mark-box d-flex align-items-center justify-content-center"><svg width="30" height="28" stroke="#fff"><use href="#cloud3"/></svg></span>
    <span class="flex-grow-1 text-center">拖拽上传</span>
  </div>
  <div class="timer sysfont d-flex align-items-center justify-content-center">01:48</div>
  <div class="side-knob d-flex flex-column gap-1"><i class="knob"></i><i class="knob"></i><i class="knob"></i></div>

  <section class="dlg position-absolute start-50 translate-middle-x" role="dialog" aria-labelledby="dlgTitle">
    <div class="dlg-head sysfont d-flex align-items-center">
      <svg width="24" height="25"><use href="#spss"/></svg>
      <span id="dlgTitle" class="ms-1 flex-grow-1">Weight Cases</span>
      <button class="plain" aria-label="Close dialog"><svg width="16" height="16" stroke="#222"><path d="m0 0 16 16M16 0 0 16"/></svg></button>
    </div>
    <div class="dlg-body">
      <div class="d-flex">
        <div class="varlist" role="listbox" aria-label="Variables">
          <button class="d-flex align-items-center" role="option" aria-selected="true"><svg width="24" height="22"><use href="#ruler"/></svg>freq</button>
          <button class="d-flex align-items-center" role="option" aria-selected="false"><svg width="24" height="22"><use href="#ruler"/></svg>offer</button>
        </div>
        <div>
          <div class="groupbox">
            <div class="form-check"><input class="form-check-input" type="radio" name="w" id="w0" checked><label for="w0"><u>D</u>o not weight cases</label></div>
            <div class="form-check"><input class="form-check-input" type="radio" name="w" id="w1"><label for="w1"><u>W</u>eight cases by</label></div>
            <div class="d-flex align-items-end">
              <button class="mover p-0" aria-label="Move variable" disabled><svg class="m-auto" width="22" height="20"><path d="M1 2q3 6 10 5V2l10 9-9 8v-5Q2 13 1 2z" fill="#6d7f93"/></svg></button>
              <div class="d-flex flex-column ms-3"><label for="fv" class="faded"><u>F</u>requency Variable:</label><input id="fv" class="freqin mt-1" type="text" disabled></div>
            </div>
          </div>
          <div class="pt-3">Current Status: Do not weight cases</div>
        </div>
      </div>
      <div class="dlgbtns d-flex justify-content-center mt-2 pt-1">
        <button class="dlgbtn first">OK</button><button class="dlgbtn"><u>P</u>aste</button><button class="dlgbtn"><u>R</u>eset</button><button class="dlgbtn">Cancel</button><button class="dlgbtn">Help</button>
      </div>
    </div>
  </section>

  <svg class="pointer" width="20" height="30" viewBox="0 0 20 30"><path d="M1 1v23l5-5 4 9 4-2-4-8h8z" fill="#fff" stroke="#222" stroke-width="1.300"/></svg>
</div>
<script>
const names = ['freq', 'offer'], cases = [['200.00', '1.00'], ['600.00', '.00'], ['100.00', '1.00'], ['100.00', '.00']];
const spare = 16, rows = 32, grid = document.getElementById('grid');
let cols = '<col class="c0"><col class="c1"><col class="c1">', head = '<th><span></span></th>', body = '';
names.forEach(n => head += `<th scope="col"><span>${n}</span></th>`);
for (let i = 0; i < spare; i++) { cols += `<col class="${i % 2 ? 'c3' : 'c2'}">`; head += '<th scope="col" class="off"><span>var</span></th>'; }
for (let r = 0; r < rows; r++) {
  const c = cases[r];
  body += `<tr><th scope="row"${c ? '' : ' class="off"'}><span>${r + 1}</span></th>`;
  for (let i = 0; i < spare + 2; i++) body += `<td>${c && c[i] || ''}</td>`;
  body += '</tr>';
}
grid.querySelector('colgroup').innerHTML = cols;
grid.tHead.rows[0].innerHTML = head;
grid.tBodies[0].innerHTML = body;
</script>
</body>
</html>
